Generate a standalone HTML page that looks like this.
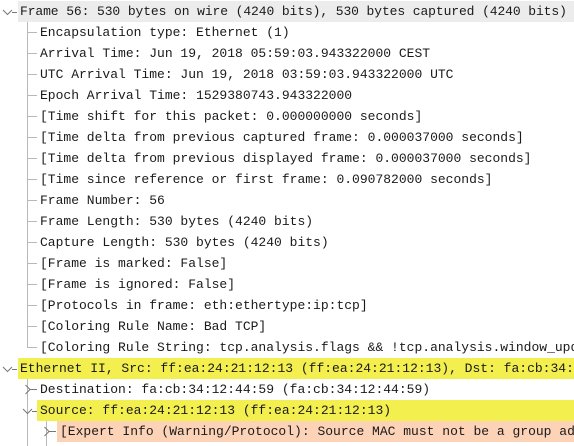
<!DOCTYPE html>
<html><head><style>
body{margin:0;width:574px;height:446px;overflow:hidden;background:#fff;position:relative;font-family:"Liberation Mono",monospace;font-size:13px;color:#1a1a1a}
.r{position:absolute;left:0;width:574px;height:21px;line-height:21px;white-space:nowrap;overflow:hidden}
.t{position:absolute;top:0}
.bg{position:absolute;top:0;height:21px;right:0}
.l{position:absolute;background:#b8b8b8}
svg{position:absolute}
</style></head><body>
<div class="l" style="left:27px;top:22px;width:1px;height:326px"></div>
<div class="l" style="left:27px;top:379px;width:1px;height:67px"></div>
<div class="l" style="left:46px;top:421px;width:1px;height:25px"></div>

<div class="r" style="top:1px"><div class="bg" style="left:18px;background:#ececec"></div><span class="t" style="left:20px;letter-spacing:-0.1px">Frame 56: 530 bytes on wire (4240 bits), 530 bytes captured (4240 bits)</span></div>
<svg style="left:0;top:1px" width="20" height="21"><path d="M3 9 L7.5 13.5 L12 9 M12 11.5 H17" stroke="#777" fill="none" stroke-width="1"/></svg>

<div id="kids"></div>
<script>
var items=["Encapsulation type: Ethernet (1)","Arrival Time: Jun 19, 2018 05:59:03.943322000 CEST","UTC Arrival Time: Jun 19, 2018 03:59:03.943322000 UTC","Epoch Arrival Time: 1529380743.943322000","[Time shift for this packet: 0.000000000 seconds]","[Time delta from previous captured frame: 0.000037000 seconds]","[Time delta from previous displayed frame: 0.000037000 seconds]","[Time since reference or first frame: 0.090782000 seconds]","Frame Number: 56","Frame Length: 530 bytes (4240 bits)","Capture Length: 530 bytes (4240 bits)","[Frame is marked: False]","[Frame is ignored: False]","[Protocols in frame: eth:ethertype:ip:tcp]","[Coloring Rule Name: Bad TCP]","[Coloring Rule String: tcp.analysis.flags && !tcp.analysis.window_update]"];
var h="";
items.forEach(function(s,i){var top=22+21*i;
h+='<div class="r" style="top:'+top+'px"><span class="t" style="left:40px">'+s.replace(/&/g,'&amp;')+'</span></div>';
h+='<div class="l" style="left:27px;top:'+(top+10)+'px;width:10px;height:1px"></div>';});
document.getElementById('kids').innerHTML=h;
</script>

<div class="r" style="top:358px"><div class="bg" style="left:18px;background:#f2ef4e"></div><span class="t" style="left:20px">Ethernet II, Src: ff:ea:24:21:12:13 (ff:ea:24:21:12:13), Dst: fa:cb:34:12:44:59</span></div>
<svg style="left:0;top:358px" width="20" height="21"><path d="M3 9 L7.5 13.5 L12 9 M12 11.5 H17" stroke="#777" fill="none"/></svg>

<div class="r" style="top:379px"><span class="t" style="left:40px">Destination: fa:cb:34:12:44:59 (fa:cb:34:12:44:59)</span></div>
<svg style="left:20px;top:379px" width="20" height="21"><path d="M5.5 6 L10 10.5 L5.5 15 M10 10.5 H17" stroke="#777" fill="none"/></svg>

<div class="r" style="top:400px"><div class="bg" style="left:37px;background:#f2ef4e"></div><span class="t" style="left:40px">Source: ff:ea:24:21:12:13 (ff:ea:24:21:12:13)</span></div>
<svg style="left:20px;top:400px" width="20" height="21"><path d="M3 9 L7.5 13.5 L12 9 M12 11.5 H17" stroke="#777" fill="none"/></svg>

<div class="r" style="top:421px"><div class="bg" style="left:57px;background:#fdd3b8"></div><span class="t" style="left:60px">[Expert Info (Warning/Protocol): Source MAC must not be a group address: IEEE 802.3-2002, Section 3.2.3(b)]</span></div>
<svg style="left:39px;top:421px" width="20" height="21"><path d="M5.5 6 L10 10.5 L5.5 15 M10 10.5 H17" stroke="#777" fill="none"/></svg>
</body></html>
